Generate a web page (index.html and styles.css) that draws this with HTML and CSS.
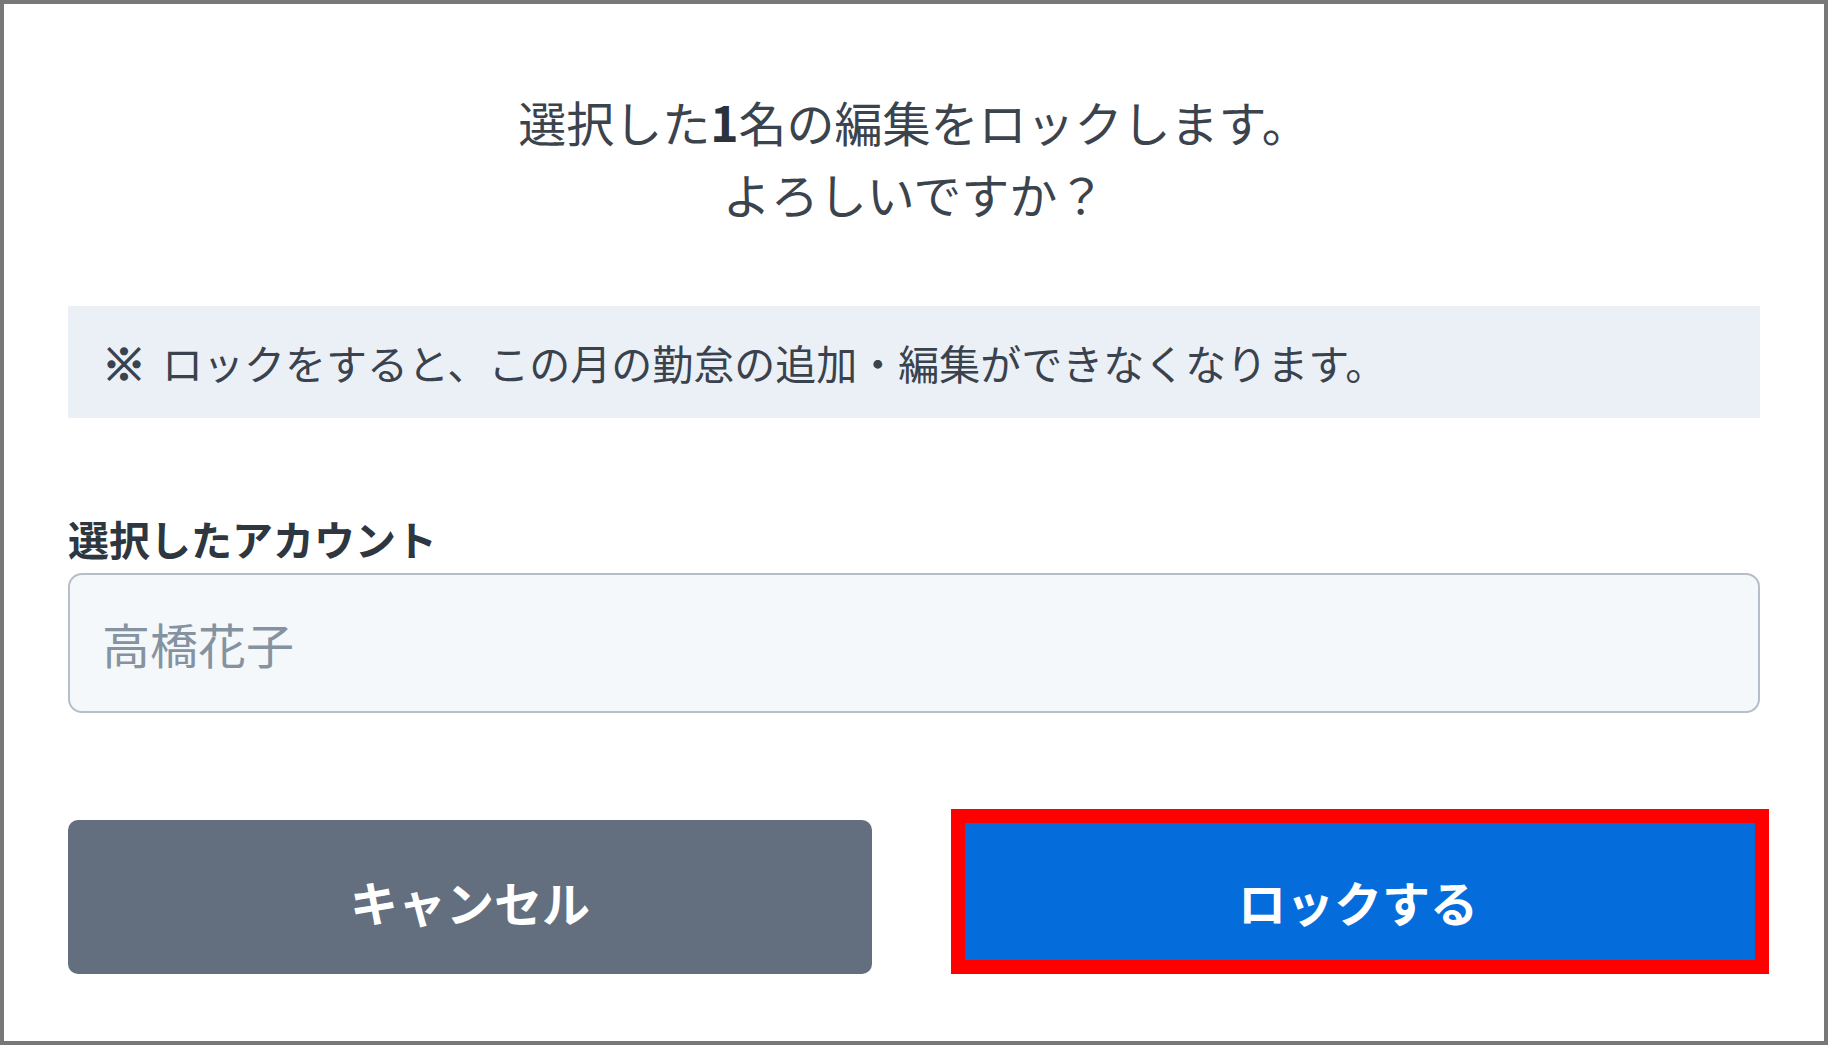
FILE: index.html
```html
<!DOCTYPE html>
<html lang="ja">
<head>
<meta charset="utf-8">
<title>ロック確認</title>
<link rel="stylesheet" href="styles.css">
</head>
<body>
<div class="dialog">
  <p class="title">選択した<b class="num">1</b>名の編集をロックします。<br>よろしいですか？</p>
  <div class="notice"><span class="mark">※</span>ロックをすると、この月の勤怠の追加・編集ができなくなります。</div>
  <div class="field">
    <div class="label">選択したアカウント</div>
    <div class="input">高橋花子</div>
  </div>
  <div class="actions">
    <button class="btn btn-cancel">キャンセル</button>
    <div class="highlight">
      <button class="btn btn-lock">ロックする</button>
    </div>
  </div>
</div>
</body>
</html>
```

FILE: styles.css
```css
html, body {
  margin: 0;
  padding: 0;
  background: #ffffff;
}
body {
  font-family: "Noto Sans CJK JP", "Noto Sans", sans-serif;
  color: #39424d;
}
.dialog {
  box-sizing: border-box;
  width: 1828px;
  height: 1045px;
  border: 4px solid #787878;
  padding: 81px 64px 0 64px;
  display: flex;
  flex-direction: column;
}
.title {
  margin: 0;
  font-size: 48px;
  line-height: 72px;
  text-align: center;
  color: #3b434d;
}
.num {
  font-weight: 700;
  color: #2a323c;
}
.notice {
  margin-top: 77px;
  background: #ebf0f7;
  padding: 25px 34px;
  font-size: 41px;
  line-height: 62px;
  color: #39424d;
}
.mark {
  display: inline-block;
  font-weight: 700;
  font-size: 44px;
  line-height: 62px;
  vertical-align: top;
  -webkit-text-stroke: 1.5px #39424d;
  margin-right: 16px;
}
.field {
  margin-top: 89px;
  display: flex;
  flex-direction: column;
  gap: 4px;
}
.label {
  font-size: 41px;
  line-height: 62px;
  font-weight: 700;
  color: #2e3640;
}
.input {
  box-sizing: border-box;
  height: 140px;
  border: 2px solid #b5bec9;
  border-radius: 14px;
  background: #f5f8fb;
  padding: 0 32px;
  display: flex;
  align-items: center;
  font-size: 48px;
  color: #8593a1;
}
.actions {
  margin-top: 107px;
  display: grid;
  grid-template-columns: 1fr 1fr;
  gap: 84px;
}
.btn {
  box-sizing: border-box;
  width: 100%;
  height: 154px;
  border: none;
  border-radius: 10px;
  font-family: "Noto Sans CJK JP", "Noto Sans", sans-serif;
  font-size: 48px;
  font-weight: 700;
  color: #ffffff;
  padding: 8px 0 0 0;
  display: flex;
  align-items: center;
  justify-content: center;
}
.btn-cancel {
  background: #636f7e;
}
.btn-lock {
  background: #056cdb;
}
.highlight {
  position: relative;
}
.highlight::after {
  content: "";
  position: absolute;
  left: -5px;
  top: -11px;
  right: -9px;
  bottom: 0;
  border: 14px solid #ff0000;
  pointer-events: none;
}
```
